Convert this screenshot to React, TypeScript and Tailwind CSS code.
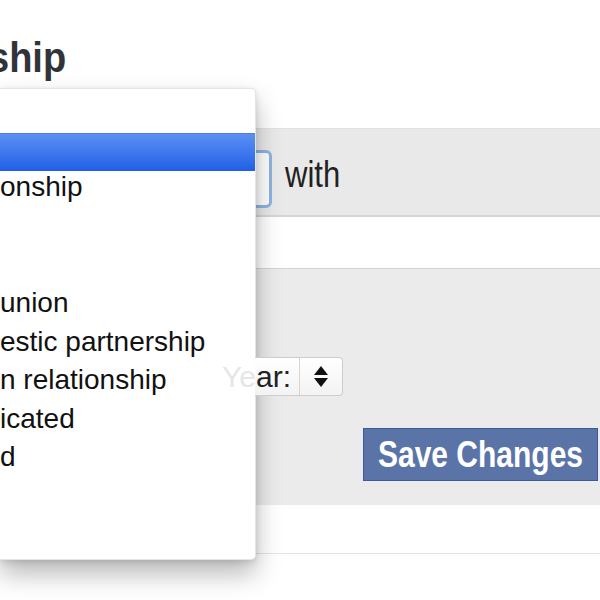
export default function App() {
  const rows: { text: string; active?: boolean }[] = [
    { text: "" },
    { text: "", active: true },
    { text: "onship" },
    { text: "" },
    { text: "" },
    { text: "union" },
    { text: "estic partnership" },
    { text: "n relationship" },
    { text: "icated" },
    { text: "d" },
    { text: "" },
    { text: "" },
  ];

  return (
    <div className="relative w-[600px] h-[600px] overflow-hidden bg-white font-['Liberation_Sans',Arial,sans-serif]">
      {/* heading */}
      <div className="h-[128px] pt-[41px]">
        <h1 className="ml-[-12px] text-[38px] leading-none font-bold text-[#30343a] origin-bottom scale-y-110">ship</h1>
      </div>

      {/* status row */}
      <div className="h-[89px] bg-[#e9e9e9] border-t border-[#e2e2e2] border-b-2 border-b-[#d5d5d5] flex items-start pt-[21px]">
        <div className="ml-[140px] w-[132px] h-[58px] rounded-[6px] border-[3px] border-[#8db3e2] bg-white" />
        <span className="ml-[13px] mt-[12px] text-[31px] leading-none text-[#222] origin-bottom scale-y-[1.2]">with</span>
      </div>

      <div className="h-[51px]" />

      {/* date + save */}
      <div className="h-[237px] bg-[#ebebeb] border-t border-[#d4d4d4]">
        <div className="relative z-10 ml-[255px] mt-[88px] w-[88px] h-[39px] flex rounded-r-[4px] border border-l-0 border-[#cdcdcd] bg-gradient-to-b from-white to-[#f3f3f3]">
          <span className="flex-1 text-[30px] leading-[37px] text-[#222] whitespace-nowrap">
            <span className="ml-[-33px] text-[#e6e6e6]">Ye</span>ar:
          </span>
          <div className="w-[43px] border-l border-[#d6d6d6] flex flex-col items-center justify-center gap-[3px]">
            <svg width="14" height="9" viewBox="0 0 14 9"><path d="M7 0L14 9H0Z" fill="#111" /></svg>
            <svg width="14" height="9" viewBox="0 0 14 9"><path d="M0 0H14L7 9Z" fill="#111" /></svg>
          </div>
        </div>
        <button className="ml-[363px] mt-[32px] w-[235px] h-[53px] bg-[#5b74a8] border border-[#3d5a96] text-white font-bold text-[30px] leading-none text-center">
          <span className="inline-block scale-y-[1.2]">Save Changes</span>
        </button>
      </div>

      <div className="mt-[48px] border-t border-[#e4e4e4]" />

      {/* open dropdown menu */}
      <div className="absolute left-0 top-[88px] w-[256px] h-[472px] pt-[5px] bg-white rounded-r-[5px] border border-l-0 border-black/10 shadow-[0_14px_26px_rgba(0,0,0,0.28),0_2px_6px_rgba(0,0,0,0.12)]">
        {rows.map((r, i) => (
          <div
            key={i}
            className={
              r.active
                ? "h-[38.6px] border-t border-[#4a7ee0] bg-gradient-to-b from-[#5b8ff3] to-[#1f5fe6]"
                : "h-[38.6px] text-[28px] leading-[32px] text-[#111] whitespace-nowrap"
            }
          >
            {r.text}
          </div>
        ))}
      </div>
    </div>
  );
}
